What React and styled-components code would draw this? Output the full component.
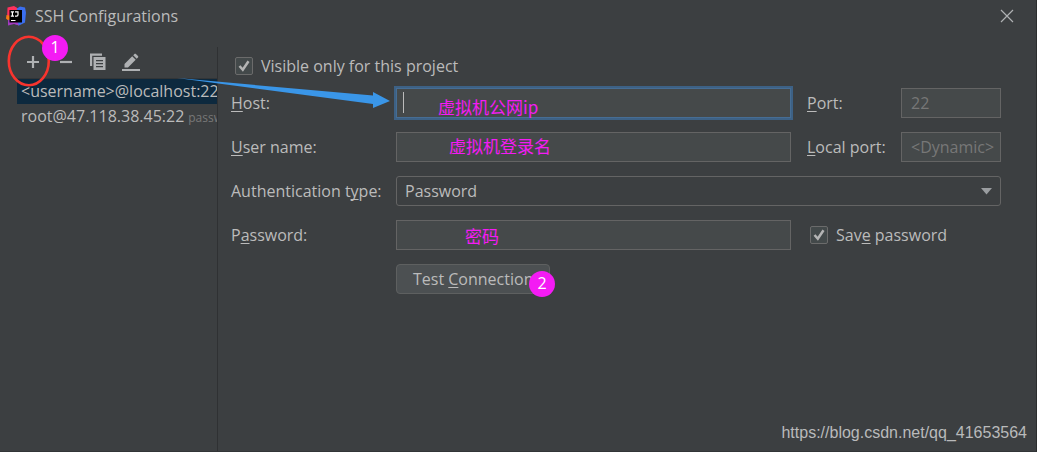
import React, { useState } from 'react';
import styled, { createGlobalStyle } from 'styled-components';

const GlobalStyle = createGlobalStyle`
    * {
        box-sizing: border-box;
    }

    body {
        margin: 0;
        background-color: #3c3f41;
        color: #bbbbbb;
        font-family: 'Open Sans', 'Noto Sans', 'Noto Sans CJK SC', sans-serif;
        font-size: 16px;
        line-height: 24px;
    }
`;

const Dialog = styled.div`
    position: relative;
    display: flex;
    flex-direction: column;
    min-height: 100vh;
    border-right: 1px solid #2b2d2e;
    border-bottom: 1px solid #323537;
`;

const TitleBar = styled.header`
    display: flex;
    align-items: center;
    gap: 9px;
    height: 32px;
    padding: 0 22px 0 6px;
`;

const Title = styled.h1`
    flex: 1;
    margin: 0;
    font-size: 16px;
    font-weight: 400;
`;

const IconButton = styled.button`
    display: flex;
    padding: 0;
    border: none;
    background: none;
    color: #afb1b3;
    cursor: pointer;
`;

const Body = styled.div`
    display: flex;
    flex: 1;
    padding-top: 15px;
`;

const Sidebar = styled.aside`
    flex: none;
    width: 218px;
    padding-left: 17px;
    border-right: 1px solid #2f3133;
`;

const Toolbar = styled.div`
    display: flex;
    align-items: center;
    gap: 13px;
    height: 32px;
    padding: 0 0 2px 6px;
    border-bottom: 1px solid #323537;
`;

const List = styled.ul`
    margin: 0;
    padding: 0;
    list-style: none;
`;

const ListRow = styled.li`
    height: 25px;
    padding-left: 4px;
    overflow: hidden;
    white-space: nowrap;
    background-color: ${({ $selected }) => ($selected ? '#0d293e' : 'transparent')};
`;

const Hint = styled.span`
    margin-left: 4px;
    color: #787878;
    font-size: 12px;
`;

const Form = styled.form`
    flex: 1;
    padding: 7px 35px 0 13px;
`;

const Grid = styled.div`
    display: grid;
    grid-template-columns: 165px 1fr 110px 100px;
    row-gap: 14px;
    margin-top: 10px;
`;

const Label = styled.label`
    align-self: center;
    padding-left: ${({ $side }) => ($side ? '16px' : '0')};
    white-space: nowrap;
`;

const Key = styled.u`
    text-underline-offset: 2px;
    text-decoration-thickness: 1px;
    text-decoration-skip-ink: none;
`;

const Field = styled.div`
    position: relative;
    grid-column: ${({ $wide }) => ($wide ? 'span 3' : 'auto')};
`;

const Input = styled.input`
    display: block;
    width: 100%;
    height: 30px;
    padding: 0 0 0 9px;
    border: 1px solid ${({ $active }) => ($active ? '#466d94' : '#646464')};
    outline: none;
    box-shadow: ${({ $active }) => ($active ? '0 0 0 2px #3d6185' : 'none')};
    background-color: #45494a;
    color: #bbbbbb;
    font: inherit;

    &::placeholder {
        color: #777777;
        opacity: 1;
    }
`;

const Select = styled.select`
    display: block;
    width: 100%;
    height: 30px;
    padding: 0 8px;
    border: 1px solid #646464;
    border-radius: 3px;
    outline: none;
    appearance: none;
    background-color: #3c3f41;
    color: #bbbbbb;
    font: inherit;
`;

const SelectArrow = styled.svg`
    position: absolute;
    top: 12px;
    right: 9px;
    pointer-events: none;
`;

const Caret = styled.span`
    position: absolute;
    top: 4px;
    left: 7px;
    width: 1px;
    height: 21px;
    background-color: #bbbbbb;
`;

const Note = styled.span`
    position: absolute;
    top: ${({ $top }) => $top}px;
    left: ${({ $left }) => $left}px;
    color: #f41bf4;
    font-family: 'Noto Sans CJK SC', sans-serif;
    font-size: 17px;
    pointer-events: none;
`;

const CheckLabel = styled.label`
    display: flex;
    align-items: center;
    gap: 8px;
    padding-left: ${({ $side }) => ($side ? '19px' : '4px')};
    grid-column: ${({ $side }) => ($side ? 'span 2' : 'auto')};
    white-space: nowrap;
`;

const CheckFrame = styled.span`
    display: grid;
    flex: none;

    > * {
        grid-area: 1 / 1;
    }
`;

const Checkbox = styled.input`
    width: 18px;
    height: 18px;
    margin: 0;
    border: 1px solid #6b6b6b;
    border-radius: 2px;
    appearance: none;
    background-color: #43494a;
`;

const CheckMark = styled.svg`
    pointer-events: none;
`;

const TestButton = styled.button`
    position: relative;
    grid-column: 2;
    justify-self: start;
    height: 30px;
    padding: 0 16px;
    border: 1px solid #5e6060;
    border-radius: 4px;
    background-color: #4c5052;
    color: #bbbbbb;
    font: inherit;
    cursor: pointer;
`;

const Badge = styled.span`
    position: absolute;
    top: ${({ $top }) => $top}px;
    left: ${({ $left }) => $left}px;
    width: 26px;
    height: 26px;
    border-radius: 50%;
    background-color: #f41bf4;
    color: #ffffff;
    text-align: center;
`;

const Marks = styled.svg`
    position: absolute;
    top: 0;
    left: 0;
    pointer-events: none;
`;

const Watermark = styled.footer`
    position: absolute;
    right: 9px;
    bottom: 6px;
    color: #b9babb;
    font-family: 'Liberation Sans', Arial, sans-serif;
    font-size: 16px;
`;

function Logo() {
    return (
        <svg width="20" height="20" viewBox="0 0 20 20" aria-hidden="true">
            <path d="M1.500 1.500 8 0l5 3-4 8-8 2z" fill="#fe315d" />
            <path d="M.5 9l5 1 2 7-4-1.500L0 12.500z" fill="#f97a12" />
            <path d="M11 2.500 14 .5 19 1.500l1 5-1 10-6 3-4-1.500z" fill="#3b6ff0" />
            <path d="M2 14l8-2 3 7.500-5-1.500-6 1.500z" fill="#a23bc0" />
            <rect x="3.500" y="4" width="12.500" height="12.500" fill="#000000" />
            <path
                d="M4.800 5.800h3.200M6.400 6v4M4.800 10.200h3.200M9 5.800h3v3q0 1.400-1.400 1.400H9M5 14.500h4.500"
                fill="none"
                stroke="#ffffff"
                strokeWidth="1.200"
            />
        </svg>
    );
}

function Check({ id, checked, onChange }) {
    return (
        <CheckFrame>
            <Checkbox type="checkbox" id={id} checked={checked} onChange={onChange} />
            {checked && (
                <CheckMark width="18" height="18" viewBox="0 0 18 18" aria-hidden="true">
                    <path d="M4.500 9 7.800 12.800 13.500 4.200" fill="none" stroke="#b4b4b4" strokeWidth="2.500" />
                </CheckMark>
            )}
        </CheckFrame>
    );
}

export default function App() {
    const [projectOnly, setProjectOnly] = useState(true);
    const [savePassword, setSavePassword] = useState(true);
    const [details, setDetails] = useState({
        host: '',
        username: '',
        authType: 'Password',
        password: ''
    });

    const handleChange = (e) => {
        const { name, value } = e.target;
        setDetails({ ...details, [name]: value });
    };

    return (
        <Dialog>
            <GlobalStyle />
            <TitleBar>
                <Logo />
                <Title>SSH Configurations</Title>
                <IconButton type="button" aria-label="Close">
                    <svg width="14" height="14" viewBox="0 0 14 14">
                        <path d="M1 1l12 12M13 1L1 13" stroke="currentColor" strokeWidth="1.200" />
                    </svg>
                </IconButton>
            </TitleBar>
            <Body>
                <Sidebar>
                    <Toolbar>
                        <IconButton type="button" aria-label="Add">
                            <svg width="20" height="20" viewBox="0 0 20 20">
                                <path d="M10 4v12M4 10h12" stroke="currentColor" strokeWidth="2.200" />
                            </svg>
                        </IconButton>
                        <IconButton type="button" aria-label="Remove">
                            <svg width="20" height="20" viewBox="0 0 20 20">
                                <path d="M4 10h12" stroke="currentColor" strokeWidth="2.200" />
                            </svg>
                        </IconButton>
                        <IconButton type="button" aria-label="Copy">
                            <svg width="20" height="20" viewBox="0 0 20 20">
                                <path d="M1 1.500h12v2.200H3.200V14H1z" fill="currentColor" />
                                <path
                                    d="M4.500 5H16.500V18H4.500zM7 8v1.200h7V8zM7 11v1.200h7V11zM7 14v1.200h7V14z"
                                    fill="currentColor"
                                    fillRule="evenodd"
                                />
                            </svg>
                        </IconButton>
                        <IconButton type="button" aria-label="Edit">
                            <svg width="20" height="20" viewBox="0 0 20 20">
                                <path
                                    d="M2.500 15.500V12l7.700-7.700 3.500 3.500L6 15.500zM11.200 3.300l1.500-1.500h1l2.500 2.500v1l-1.500 1.500zM0 17h18v2H0z"
                                    fill="currentColor"
                                />
                            </svg>
                        </IconButton>
                    </Toolbar>
                    <List>
                        <ListRow $selected>&lt;username&gt;@localhost:22</ListRow>
                        <ListRow>
                            root@47.118.38.45:22<Hint>password</Hint>
                        </ListRow>
                    </List>
                </Sidebar>
                <Form onSubmit={(e) => e.preventDefault()}>
                    <CheckLabel htmlFor="projectOnly">
                        <Check
                            id="projectOnly"
                            checked={projectOnly}
                            onChange={(e) => setProjectOnly(e.target.checked)}
                        />
                        Visible only for this project
                    </CheckLabel>
                    <Grid>
                        <Label htmlFor="host"><Key>H</Key>ost:</Label>
                        <Field>
                            <Input id="host" name="host" value={details.host} onChange={handleChange} $active />
                            <Caret />
                            <Note $top={7} $left={42}>虚拟机公网ip</Note>
                        </Field>
                        <Label htmlFor="port" $side><Key>P</Key>ort:</Label>
                        <Input id="port" placeholder="22" disabled />

                        <Label htmlFor="username"><Key>U</Key>ser name:</Label>
                        <Field>
                            <Input id="username" name="username" value={details.username} onChange={handleChange} />
                            <Note $top={2} $left={53}>虚拟机登录名</Note>
                        </Field>
                        <Label htmlFor="localPort" $side><Key>L</Key>ocal port:</Label>
                        <Input id="localPort" placeholder="<Dynamic>" disabled />

                        <Label htmlFor="authType">Authentication t<Key>y</Key>pe:</Label>
                        <Field $wide>
                            <Select id="authType" name="authType" value={details.authType} onChange={handleChange}>
                                <option>Password</option>
                                <option>Key pair</option>
                            </Select>
                            <SelectArrow width="11" height="7" viewBox="0 0 11 7" aria-hidden="true">
                                <path d="M0 0h11L5.500 6.500z" fill="#9a9da0" />
                            </SelectArrow>
                        </Field>

                        <Label htmlFor="password">P<Key>a</Key>ssword:</Label>
                        <Field>
                            <Input
                                type="password"
                                id="password"
                                name="password"
                                value={details.password}
                                onChange={handleChange}
                            />
                            <Note $top={4} $left={69}>密码</Note>
                        </Field>
                        <CheckLabel htmlFor="savePassword" $side>
                            <Check
                                id="savePassword"
                                checked={savePassword}
                                onChange={(e) => setSavePassword(e.target.checked)}
                            />
                            <span>Sav<Key>e</Key> password</span>
                        </CheckLabel>

                        <TestButton type="button">
                            Test <Key>C</Key>onnection
                            <Badge $top={6} $left={132}>2</Badge>
                        </TestButton>
                    </Grid>
                </Form>
            </Body>
            <Marks width="400" height="130" viewBox="0 0 400 130" aria-hidden="true">
                <ellipse cx="28.800" cy="61" rx="20" ry="24.200" fill="none" stroke="#f8342e" strokeWidth="2.600" />
                <path d="M177 78 L373 95.500 V92 L390 101 L373 108 V104z" fill="#3a96e8" />
            </Marks>
            <Badge $top={35} $left={42}>1</Badge>
            <Watermark>https://blog.csdn.net/qq_41653564</Watermark>
        </Dialog>
    );
}
